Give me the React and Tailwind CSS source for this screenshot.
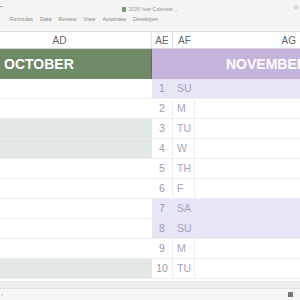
import React from "react";

const menu = ["Formulas", "Data", "Review", "View", "Automate", "Developer"];
const days = [
  { n: 1, d: "SU", nov: true, oct: false },
  { n: 2, d: "M", nov: false, oct: false },
  { n: 3, d: "TU", nov: false, oct: true },
  { n: 4, d: "W", nov: false, oct: true },
  { n: 5, d: "TH", nov: false, oct: false },
  { n: 6, d: "F", nov: false, oct: false },
  { n: 7, d: "SA", nov: true, oct: false },
  { n: 8, d: "SU", nov: true, oct: false },
  { n: 9, d: "M", nov: false, oct: false },
  { n: 10, d: "TU", nov: false, oct: true },
];

export default function App() {
  return (
    <div className="w-[300px] h-[300px] overflow-hidden bg-white flex flex-col font-['Liberation_Sans',Arial,sans-serif]">
      {/* title + ribbon tabs */}
      <div className="h-[32px] shrink-0 bg-[#f4f4f4] border-b border-[#dcdcdc] relative">
        <div className="absolute left-0 top-[6px] w-[3px] h-px bg-[#aaa]" />
        <div className="h-[13px] flex items-end justify-center gap-[3px] text-[5px] text-[#999]">
          <span className="w-[4px] h-[5px] bg-[#6aa457] rounded-[1px] mb-px" />
          <span>2026 Year Calendar ⌄</span>
        </div>
        <div className="absolute right-[2px] top-[5px] w-[4px] h-[4px] border border-[#bbb] rounded-full" />
        <div className="flex gap-[7px] pl-[10px] pt-[2px] text-[5.5px] text-[#888]">
          {menu.map((m) => (
            <span key={m}>{m}</span>
          ))}
        </div>
      </div>

      {/* column letters */}
      <div className="h-[17px] shrink-0 grid grid-cols-[152px_21px_22px_1fr] border-b border-[#d6d6d6] text-[10px] text-[#666]">
        <div className="flex items-center justify-center pr-[32px] border-r border-[#e2e2e2]">AD</div>
        <div className="flex items-center justify-center border-r border-[#e2e2e2]">AE</div>
        <div className="flex items-center pl-[5px]">AF</div>
        <div className="flex items-center justify-end pr-[4px]">AG</div>
      </div>

      {/* month headers */}
      <div className="h-[30px] shrink-0 grid grid-cols-[152px_1fr] text-white font-bold text-[14px] whitespace-nowrap overflow-hidden">
        <div className="bg-[#6f8a67] flex items-center pl-[4px] border-r border-[#5d6e58]">OCTOBER</div>
        <div className="bg-[#c4b3da] flex items-center pl-[74px]">NOVEMBER</div>
      </div>

      {/* day rows */}
      <div className="flex flex-col">
        {days.map((r) => (
          <div
            key={r.n}
            className="h-[20px] grid grid-cols-[152px_21px_22px_1fr] text-[10.5px]"
          >
            <div className={`border-b border-[#ededed] ${r.oct ? "bg-[#e2e8e4] border-[#e2e8e4]" : "bg-white"}`} />
            <div
              className={`flex items-center justify-center border-b border-r border-[#ececf0] text-[#9b9aa9] ${r.nov ? "bg-[#e6e6f7]" : "bg-white"}`}
            >
              {r.n}
            </div>
            <div
              className={`flex items-center pl-[4px] border-b border-r border-[#ececf0] text-[#a7a2c0] ${r.nov ? "bg-[#e6e6f7]" : "bg-white"}`}
            >
              {r.d}
            </div>
            <div className={`border-b border-[#ececf0] ${r.nov ? "bg-[#e6e6f7]" : "bg-white"}`} />
          </div>
        ))}
      </div>

      {/* bottom bars */}
      <div className="flex-1 flex flex-col">
        <div className="h-[2px] bg-white" />
        <div className="h-[8px] bg-[#efefef] border-y border-[#e3e3e3]" />
        <div className="flex-1 bg-[#f7f7f7] flex items-center justify-between px-[1px]">
          <span className="text-[5px] text-[#999]">›</span>
          <span className="w-[5px] h-[5px] bg-[#777] mr-[6px]" />
        </div>
      </div>
    </div>
  );
}
